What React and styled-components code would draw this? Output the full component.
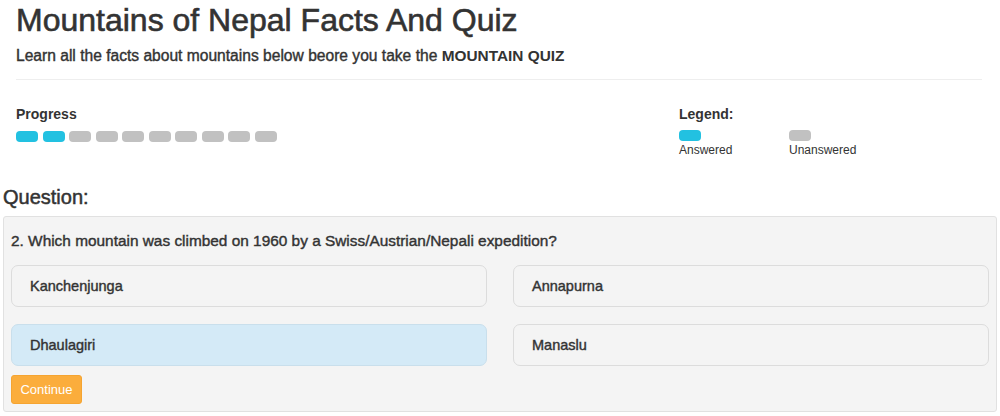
import React from "react";
import styled, { createGlobalStyle } from "styled-components";

const Global = createGlobalStyle`
  html, body { margin: 0; padding: 0; background: #fff; }
  body {
    font-family: "Liberation Sans", Arial, Helvetica, sans-serif;
    color: #333;
  }
  * { box-sizing: border-box; }
`;

const Page = styled.div`
  width: 1000px;
  padding: 0 3px 0 3px;
`;

const Header = styled.header`
  padding: 0 15px 0 13px;
`;

const Title = styled.h1`
  margin: 2px 0 0;
  font-size: 32px;
  line-height: 36px;
  font-weight: 400;
  color: #333;
  -webkit-text-stroke: 0.6px #333;
`;

const Lead = styled.p`
  margin: 8px 0 0;
  font-size: 15.6px;
  line-height: 20px;
  -webkit-text-stroke: 0.4px #333;
  b { font-weight: 700; -webkit-text-stroke: 0; font-size: 15.4px; }
`;

const Rule = styled.hr`
  margin: 13px 0 0;
  border: 0;
  border-top: 1px solid #eee;
`;

const StatusRow = styled.section`
  display: flex;
  margin-top: 24px;
`;

const ProgressCol = styled.div`
  width: 663px;
`;

const Label = styled.div`
  font-size: 14px;
  line-height: 20px;
  font-weight: 700;
  color: #333;
`;

const Pills = styled.div`
  display: flex;
  gap: 4.5px;
  margin-top: 7px;
`;

const Pill = styled.span`
  display: block;
  width: 22px;
  height: 11px;
  border-radius: 4px;
  background: ${(p) => (p.$done ? "#22c1e1" : "#c1c1c1")};
`;

const LegendCol = styled.div`
  display: flex;
  flex-direction: column;
`;

const LegendItems = styled.div`
  display: flex;
  margin-top: 6px;
`;

const LegendItem = styled.div`
  width: 110px;
  display: flex;
  flex-direction: column;
  align-items: flex-start;
  gap: 2px;
`;

const LegendText = styled.span`
  font-size: 12px;
  line-height: 14px;
  color: #333;
`;

const QuestionHeading = styled.h2`
  margin: 28px 0 0;
  font-size: 20px;
  line-height: 24px;
  font-weight: 400;
  -webkit-text-stroke: 0.5px #333;
`;

const Panel = styled.div`
  margin-top: 7px;
  background: #f4f4f4;
  border: 1px solid #e1e1e1;
  border-radius: 3px;
  padding: 14px 7px 7px;
`;

const QuestionText = styled.div`
  font-size: 15.4px;
  line-height: 20px;
  -webkit-text-stroke: 0.4px #333;
`;

const Options = styled.div`
  display: grid;
  grid-template-columns: 476px 476px;
  column-gap: 26px;
  row-gap: 17px;
  margin-top: 14px;
`;

const Option = styled.div`
  height: 42px;
  padding: 10px 18px;
  border: 1px solid ${(p) => (p.$selected ? "#c9dfec" : "#dcdcdc")};
  background: ${(p) => (p.$selected ? "#d4eaf7" : "#f4f4f4")};
  border-radius: 7px;
  font-size: 14.5px;
  line-height: 21px;
  color: #333;
  -webkit-text-stroke: 0.4px #333;
`;

const ContinueButton = styled.button`
  display: block;
  margin-top: 9px;
  width: 71px;
  height: 29px;
  padding: 0;
  border: 1px solid #f5a431;
  border-radius: 3px;
  background: #fbad3c;
  color: #fff;
  font-family: "Liberation Sans", Arial, sans-serif;
  font-size: 13px;
  line-height: 27px;
  text-align: center;
`;

const answers = ["Kanchenjunga", "Annapurna", "Dhaulagiri", "Manaslu"];

export default function App() {
  const progress = Array.from({ length: 10 }, (_, i) => i < 2);
  return (
    <Page>
      <Global />
      <Header>
        <Title>Mountains of Nepal Facts And Quiz</Title>
        <Lead>
          Learn all the facts about mountains below beore you take the <b>MOUNTAIN QUIZ</b>
        </Lead>
        <Rule />
        <StatusRow>
          <ProgressCol>
            <Label>Progress</Label>
            <Pills>
              {progress.map((d, i) => (
                <Pill key={i} $done={d} />
              ))}
            </Pills>
          </ProgressCol>
          <LegendCol>
            <Label>Legend:</Label>
            <LegendItems>
              <LegendItem>
                <Pill $done />
                <LegendText>Answered</LegendText>
              </LegendItem>
              <LegendItem>
                <Pill />
                <LegendText>Unanswered</LegendText>
              </LegendItem>
            </LegendItems>
          </LegendCol>
        </StatusRow>
      </Header>
      <QuestionHeading>Question:</QuestionHeading>
      <Panel>
        <QuestionText>
          2. Which mountain was climbed on 1960 by a Swiss/Austrian/Nepali expedition?
        </QuestionText>
        <Options>
          {answers.map((a) => (
            <Option key={a} $selected={a === "Dhaulagiri"}>
              {a}
            </Option>
          ))}
        </Options>
        <ContinueButton>Continue</ContinueButton>
      </Panel>
    </Page>
  );
}
